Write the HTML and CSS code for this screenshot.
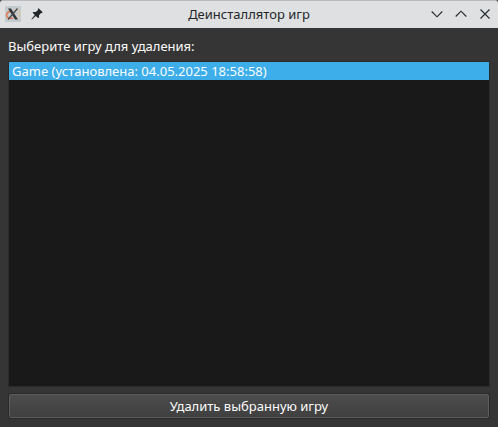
FILE: index.html
```html
<!DOCTYPE html>
<html lang="ru">
<head>
<meta charset="utf-8">
<title>Деинсталлятор игр</title>
<link rel="stylesheet" href="styles.css">
</head>
<body>
<div class="window">
  <header class="titlebar">
    <div class="side">
      <svg class="app" width="16" height="16" viewBox="0 0 16 16">
        <rect width="16" height="16" rx=".5" fill="#c4cbcf"/>
        <path d="M9 4.3C13 3.5 15.5 5.5 14.5 8.5Q13.5 11.5 10 12.5" fill="none" stroke="#dfc5a0" stroke-width="1.2"/>
        <path d="M5.5 5C1.5 6 .5 9.5 2.5 11.3Q4.5 12.8 8 12.2" fill="none" stroke="#e4764f" stroke-width="1.5"/>
        <path d="M3 2.5H6L13 13.5H10Z" fill="#303336"/>
        <path d="M12.5 2.5L3 13.5" stroke="#44484b" stroke-width="1.2"/>
      </svg>
      <svg class="pin" width="12" height="12" viewBox="0 0 12 12">
        <path d="M7.6 .2L11.7 4.3L10.7 5.2L10 4.9L8 7.2L8.1 9.3L7.1 10.2L4.8 8.1L.9 11.5L.4 11L3.8 7.1L1.6 4.8L2.5 3.9L4.7 4L7.1 1.9L6.7 1.1Z" fill="#232629"/>
      </svg>
    </div>
    <h1>Деинсталлятор игр</h1>
    <div class="side controls">
      <svg width="12" height="12" viewBox="0 0 12 12"><path d="M.7 3.5L6 8.8L11.3 3.5"/></svg>
      <svg width="12" height="12" viewBox="0 0 12 12"><path d="M.7 8.5L6 3.2L11.3 8.5"/></svg>
      <svg width="12" height="12" viewBox="0 0 12 12"><path d="M1.5 1.5L10.5 10.5M10.5 1.5L1.5 10.5"/></svg>
    </div>
  </header>
  <main>
    <label class="prompt">Выберите игру для удаления:</label>
    <div class="list">
      <div class="item">Game (установлена: 04.05.2025 18:58:58)</div>
    </div>
    <button class="remove">Удалить выбранную игру</button>
  </main>
</div>
</body>
</html>
```
FILE: styles.css
```css
* { box-sizing: border-box; }
body {
  margin: 0;
  background: #353535;
  color: #fcfcfc;
  font: 13px/18px "Noto Sans", sans-serif;
}
.window {
  width: 498px;
  height: 427px;
  display: flex;
  flex-direction: column;
  overflow: hidden;
}
.titlebar {
  height: 28px;
  flex: none;
  display: grid;
  grid-template-columns: 1fr auto 1fr;
  align-items: center;
  padding-bottom: 1px;
  background: #dee0e2;
  border-top: 1px solid #b9bbbd;
  border-radius: 3px 3px 0 0;
  color: #232629;
}
.titlebar h1 { margin: 0; font: inherit; }
.side { display: flex; align-items: center; }
.app { margin-left: 5px; }
.pin { margin-left: 10px; }
.controls { justify-content: flex-end; gap: 12px; padding-right: 7px; }
.controls path { fill: none; stroke: #232629; stroke-width: 1.1; }
main {
  flex: 1;
  display: flex;
  flex-direction: column;
  padding: 9px 8px 8px;
}
.prompt { height: 24px; }
.list {
  height: 326px;
  background: #191919;
  border: 1px solid #2a2a2a;
}
.item {
  height: 18px;
  padding-left: 3px;
  background: #3daee9;
}
.remove {
  height: 24px;
  margin: 7px 1px 0;
  padding: 0;
  border: 1px solid #5c5c5c;
  border-radius: 2px;
  background: linear-gradient(#4c4c4c, #404040);
  box-shadow: 0 0 0 1px #292929;
  color: #fcfcfc;
  font: inherit;
}
```
